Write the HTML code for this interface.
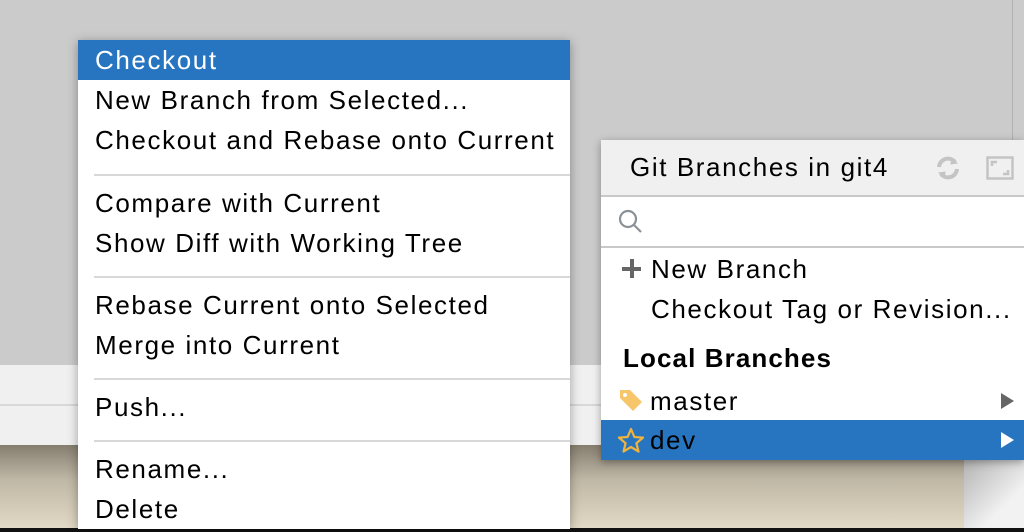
<!DOCTYPE html>
<html><head><meta charset="utf-8"><style>
*{margin:0;padding:0;box-sizing:border-box}
body{width:1024px;height:532px;overflow:hidden;position:relative;background:#cbcbcb;font-family:"Liberation Sans",sans-serif;}
.abs{position:absolute}
.menu{left:78px;top:40px;width:492px;height:489px;background:#fff;box-shadow:0 2px 10px rgba(0,0,0,.35);}
.it{position:absolute;left:0;width:492px;height:40px;line-height:40px;padding-left:17px;font-size:26px;color:#000;letter-spacing:1.6px;white-space:nowrap}
.sel{background:#2775c0;color:#fff}
.sep{position:absolute;left:16px;right:0;height:2px;background:#d8d8d8}
.pop{left:601px;top:140px;width:423px;height:320px;background:#fff;box-shadow:0 2px 8px rgba(0,0,0,.35);}
.pi{position:absolute;left:0;width:423px;height:40px;line-height:40px;font-size:26px;color:#000;letter-spacing:1.6px;white-space:nowrap}
</style></head><body>
<div class="abs" style="left:1012px;top:0;width:1px;height:140px;background:#b0b0b0"></div>
<div class="abs" style="left:0;top:365px;width:1024px;height:80px;background:#f0f0f0"></div>
<div class="abs" style="left:0;top:404px;width:1024px;height:2px;background:#d8d8d8"></div>
<div class="abs" style="left:0;top:445px;width:964px;height:87px;background:linear-gradient(#857e70,#c0b8a6 40%,#e4dcc8)"></div>
<div class="abs" style="left:964px;top:445px;width:60px;height:87px;background:linear-gradient(135deg,#a8a8a8,#f2f2f2 70%)"></div>
<div class="abs" style="left:0;top:528px;width:1024px;height:4px;background:#111"></div>

<div class="abs menu">
 <div class="it sel" style="top:0">Checkout</div>
 <div class="it" style="top:40px">New Branch from Selected...</div>
 <div class="it" style="top:80px">Checkout and Rebase onto Current</div>
 <div class="sep" style="top:134px"></div>
 <div class="it" style="top:143px">Compare with Current</div>
 <div class="it" style="top:183px">Show Diff with Working Tree</div>
 <div class="sep" style="top:236px"></div>
 <div class="it" style="top:245px">Rebase Current onto Selected</div>
 <div class="it" style="top:285px">Merge into Current</div>
 <div class="sep" style="top:338px"></div>
 <div class="it" style="top:347px">Push...</div>
 <div class="sep" style="top:400px"></div>
 <div class="it" style="top:409px">Rename...</div>
 <div class="it" style="top:449px">Delete</div>
</div>

<div class="abs pop">
 <div class="abs" style="left:0;top:0;width:423px;height:57px;background:#f0f0f0;border-bottom:2px solid #c8c8c8"></div>
 <div class="pi" style="top:7px;left:29px;height:40px">Git Branches in git4</div>
 <svg class="abs" style="left:334px;top:15px" width="26" height="26" viewBox="0 0 26 26" fill="none" stroke="#c4c4c4" stroke-width="4"><path d="M4 12a9 9 0 0 1 16-5"/><path d="M22 14a9 9 0 0 1-16 5"/><path d="M17 3l5 5-6 1z" fill="#c4c4c4" stroke-width="1"/><path d="M9 23l-5-5 6-1z" fill="#c4c4c4" stroke-width="1"/></svg>
 <svg class="abs" style="left:385px;top:16px" width="28" height="24" viewBox="0 0 28 24" fill="none" stroke="#c4c4c4" stroke-width="2.5"><rect x="1.5" y="1.5" width="25" height="21"/><path d="M6 10V6h5M22 14v4h-5"/></svg>
 <div class="abs" style="left:0;top:106px;width:423px;height:2px;background:#c8c8c8"></div>
 <svg class="abs" style="left:17px;top:69px" width="26" height="26" viewBox="0 0 26 26" fill="none" stroke="#8a9298" stroke-width="2.2"><circle cx="10" cy="10" r="8"/><path d="M16 16l7 7"/></svg>
 <div class="pi" style="top:109px;left:21px">
   <span style="display:inline-block;position:relative;width:20px;height:20px;vertical-align:-1px"><span style="position:absolute;left:0;top:8px;width:19px;height:4px;background:#666"></span><span style="position:absolute;left:8px;top:0;width:4px;height:19px;background:#666"></span></span><span style="margin-left:9px">New Branch</span></div>
 <div class="pi" style="top:149px;left:50px">Checkout Tag or Revision...</div>
 <div class="pi" style="top:198px;left:22px;font-weight:bold;letter-spacing:1.1px">Local Branches</div>
 <div class="pi" style="top:241px;left:0">
  <svg class="abs" style="left:17px;top:7px" width="26" height="26" viewBox="0 0 26 26"><path d="M2 2h10l12 12-9 9L2 10z" fill="#f7c66b"/><circle cx="7" cy="7" r="2" fill="#fff"/></svg>
  <span class="abs" style="left:49px">master</span>
  <svg class="abs" style="left:400px;top:12px" width="14" height="16"><path d="M0 0l13 8-13 8z" fill="#666"/></svg>
 </div>
 <div class="pi sel" style="top:280px;left:0">
  <svg class="abs" style="left:16px;top:7px" width="28" height="27" viewBox="0 0 28 27"><path d="M14 2l3.4 8 8.6.6-6.6 5.6 2.1 8.4L14 20l-7.5 4.6 2.1-8.4L2 10.6l8.6-.6z" fill="none" stroke="#f2b33d" stroke-width="2.2" stroke-linejoin="round"/></svg>
  <span class="abs" style="left:49px">dev</span>
  <svg class="abs" style="left:400px;top:12px" width="14" height="16"><path d="M0 0l13 8-13 8z" fill="#fff"/></svg>
 </div>
</div>
</body></html>
